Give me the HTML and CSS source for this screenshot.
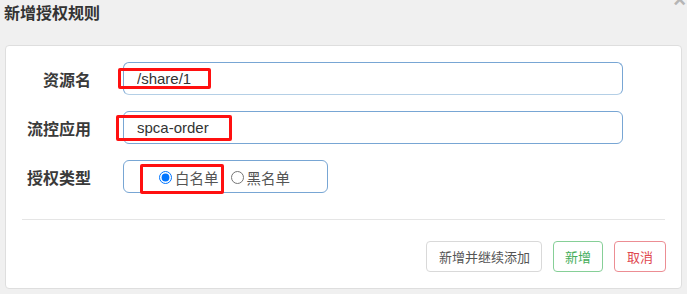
FILE: index.html
```html
<!DOCTYPE html>
<html lang="zh-CN">
<head>
<meta charset="utf-8">
<title>新增授权规则</title>
<link rel="stylesheet" href="styles.css">
</head>
<body>
<div class="page">
  <div class="header">
    <h3 class="title">新增授权规则</h3>
    <span class="close">×</span>
  </div>
  <div class="panel">
    <form class="form">
      <div class="row">
        <label class="label">资源名</label>
        <input class="input input-focus" type="text" value="/share/1">
      </div>
      <div class="row">
        <label class="label">流控应用</label>
        <input class="input" type="text" value="spca-order">
      </div>
      <div class="row">
        <label class="label">授权类型</label>
        <div class="radio-group">
          <label class="opt"><input class="radio" type="radio" name="strategy" checked>白名单</label>
          <label class="opt opt-second"><input class="radio" type="radio" name="strategy">黑名单</label>
        </div>
      </div>
    </form>
    <div class="divider"></div>
    <div class="actions">
      <button class="btn btn-default" type="button">新增并继续添加</button>
      <button class="btn btn-success" type="button">新增</button>
      <button class="btn btn-danger" type="button">取消</button>
    </div>
  </div>
  <div class="mark mark-1"></div>
  <div class="mark mark-2"></div>
  <div class="mark mark-3"></div>
</div>
</body>
</html>
```
FILE: styles.css
```css
html, body {
  margin: 0;
  padding: 0;
  background: #f0f0f0;
}
body {
  font-family: "Noto Sans CJK SC", "Liberation Sans", sans-serif;
  color: #333;
  overflow: hidden;
}
.page {
  position: relative;
  width: 687px;
  height: 294px;
}
.header {
  height: 45px;
  padding-left: 4px;
}
.title {
  margin: 0;
  font-size: 16px;
  line-height: 24px;
  font-weight: bold;
  color: #333;
}
.close {
  position: absolute;
  top: -11px;
  right: 1px;
  font-family: "Liberation Sans", sans-serif;
  font-size: 22px;
  font-weight: bold;
  color: #b5b5b5;
  line-height: 22px;
}
.panel {
  margin-left: 5px;
  width: 677px;
  height: 244px;
  box-sizing: border-box;
  background: #fff;
  border: 1px solid #dedede;
  border-radius: 4px;
  padding: 16px 16px 0 16px;
}
.form {
  display: flex;
  flex-direction: column;
  gap: 16px;
  margin: 0;
}
.row {
  display: flex;
  align-items: center;
  height: 33px;
}
.label {
  width: 69px;
  flex: none;
  text-align: right;
  font-size: 16px;
  font-weight: bold;
  color: #3a3a3a;
  margin-right: 32px;
  white-space: nowrap;
}
.input {
  width: 500px;
  height: 33px;
  box-sizing: border-box;
  border: 1px solid #78a6d4;
  border-radius: 6px;
  padding: 0 13px;
  font-family: "Liberation Sans", sans-serif;
  font-size: 15px;
  color: #333;
  background: #fff;
  outline: none;
}
.input-focus {
  border-bottom-color: #b4cfe6;
}
.radio-group {
  width: 205px;
  height: 33px;
  box-sizing: border-box;
  border: 1px solid #78a6d4;
  border-radius: 6px;
  display: flex;
  align-items: center;
  padding-left: 35px;
}
.opt {
  display: flex;
  align-items: center;
  font-size: 14.5px;
  color: #555;
  line-height: 20px;
  padding-top: 2px;
}
.opt-second {
  margin-left: 12px;
}
.radio {
  width: 13px;
  height: 13px;
  margin: 0 3px 0 0;
}
.divider {
  height: 1px;
  background: #e5e5e5;
  margin-top: 26px;
}
.actions {
  display: flex;
  justify-content: flex-end;
  gap: 11px;
  margin-top: 21px;
  margin-right: -1px;
}
.btn {
  height: 31px;
  padding: 0 11px;
  font-family: "Noto Sans CJK SC", "Liberation Sans", sans-serif;
  font-size: 13px;
  background: #fff;
  border-radius: 4px;
  border: 1px solid #d9d9d9;
  color: #555;
  cursor: pointer;
}
.btn-default {
  padding: 0 11px 0 12px;
}
.btn-success {
  border-color: #86cf97;
  color: #45ad5a;
}
.btn-danger {
  border-color: #ec8d93;
  color: #e0474f;
  padding: 0 12px;
}
.mark {
  position: absolute;
  box-sizing: border-box;
  border: 3px solid #ff1010;
  border-radius: 2px;
}
.mark-1 {
  left: 118px;
  top: 68px;
  width: 93px;
  height: 21px;
}
.mark-2 {
  left: 116px;
  top: 115px;
  width: 116px;
  height: 26px;
}
.mark-3 {
  left: 140px;
  top: 164px;
  width: 84px;
  height: 30px;
}
```
